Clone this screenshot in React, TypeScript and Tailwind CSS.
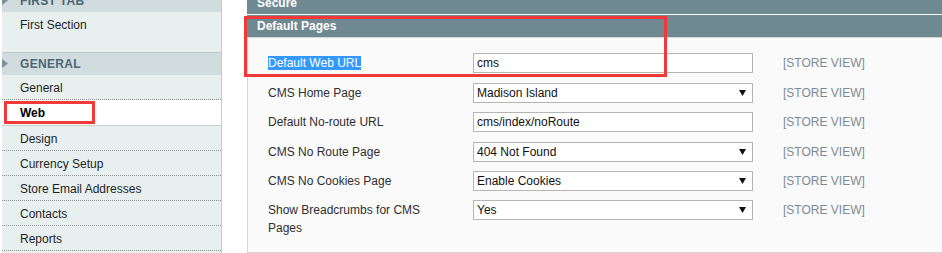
import React from "react";

const font = { fontFamily: '"Liberation Sans", Arial, sans-serif' };

function Arrow() {
  return (
    <svg width="7" height="6" viewBox="0 0 7 6" className="shrink-0">
      <path d="M0 0 L7 0 L3.5 6 Z" fill="#111" />
    </svg>
  );
}

type Row = {
  label: React.ReactNode;
  value: string;
  kind: "input" | "select";
  h: string;
};

const rows: Row[] = [
  {
    label: <span className="bg-[#3399ff] text-white">Default Web URL</span>,
    value: "cms",
    kind: "input",
    h: "h-[30px]",
  },
  { label: "CMS Home Page", value: "Madison Island", kind: "select", h: "h-[29px]" },
  { label: "Default No-route URL", value: "cms/index/noRoute", kind: "input", h: "h-[30px]" },
  { label: "CMS No Route Page", value: "404 Not Found", kind: "select", h: "h-[29px]" },
  { label: "CMS No Cookies Page", value: "Enable Cookies", kind: "select", h: "h-[29px]" },
  {
    label: (
      <>
        Show Breadcrumbs for CMS
        <br />
        Pages
      </>
    ),
    value: "Yes",
    kind: "select",
    h: "h-[37px]",
  },
];

export default function App() {
  return (
    <div
      className="w-[942px] h-[253px] overflow-hidden bg-white flex text-[12px] leading-[14px]"
      style={font}
    >
      {/* Sidebar */}
      <div className="ml-[2px] w-[220px] shrink-0 bg-[#e7efef] border-r border-[#c2cccd] flex flex-col">
        <div className="mt-[-11px] h-[23px] bg-[#d0dcde] flex items-center relative pl-[18px]">
          <svg width="6" height="9" viewBox="0 0 6 9" className="absolute left-0 top-[7px]">
            <path d="M0 0 L6 4.5 L0 9 Z" fill="#7a9098" />
          </svg>
          <span className="font-bold text-[#4e6674] tracking-[0.3px]">FIRST TAB</span>
        </div>
        <div className="h-[40px] pt-[5px] pl-[18px] leading-[16px] text-[#1f1f1f]">First Section</div>
        <div className="h-[23px] bg-[#d0dcde] border-t border-[#bcc8ca] flex items-center relative pl-[18px]">
          <svg width="6" height="9" viewBox="0 0 6 9" className="absolute left-0 top-[6px]">
            <path d="M0 0 L6 4.5 L0 9 Z" fill="#7a9098" />
          </svg>
          <span className="font-bold text-[#4e6674] tracking-[0.3px]">GENERAL</span>
        </div>
        <div className="h-[25px] flex items-center pl-[18px] pt-[1px] border-b border-dotted border-[#8a8f90] text-[#1f1f1f]">
          General
        </div>
        <div className="h-[25px] bg-white flex items-center pl-[18px] pt-[1px] font-bold text-black relative">
          Web
          <div className="absolute left-[2px] top-[1px] w-[91px] h-[23px] border-[3px] border-[#f03a3a]" />
        </div>
        <div className="h-[26px] flex items-center pl-[18px] pt-[1px] border-t border-t-[#c4cecf] border-b border-b-[#8a8f90] [border-bottom-style:dotted] text-[#1f1f1f]">
          Design
        </div>
        {["Currency Setup", "Store Email Addresses", "Contacts", "Reports"].map((t) => (
          <div
            key={t}
            className="h-[25px] flex items-center pl-[18px] pt-[1px] border-b border-dotted border-[#8a8f90] text-[#1f1f1f]"
          >
            {t}
          </div>
        ))}
      </div>

      {/* Main */}
      <div className="ml-[25px] flex-1 flex flex-col relative">
        <div className="mt-[-8px] h-[22px] bg-[#6f8992] border-b border-white flex items-center pl-[10px] font-bold text-white box-content">
          Secure
        </div>
        <div className="h-[22px] bg-[#6f8992] flex items-center pl-[10px] font-bold text-white">
          Default Pages
        </div>
        <div className="flex-1 bg-[#fafafa] border-t border-[#d6d6d6] border-l border-b pt-[15px] pl-[20px]">
          {rows.map((r, i) => (
            <div key={i} className={"flex items-start " + r.h}>
              <div className="w-[205px] shrink-0 pt-[1px] leading-[18px] text-[#2f2f2f]">{r.label}</div>
              <div className="w-[280px] h-[20px] shrink-0 bg-white border border-[#b5b5b5] flex items-center pl-[3px] pr-[6px] text-[#111]">
                <span className="flex-1">{r.value}</span>
                {r.kind === "select" && <Arrow />}
              </div>
              <div className="ml-[30px] pt-[1px] leading-[18px] text-[#7d8a96]">[STORE VIEW]</div>
            </div>
          ))}
        </div>
        <div className="absolute left-[-3px] top-[16px] w-[423px] h-[61px] border-[3px] border-[#f03a3a]" />
      </div>
    </div>
  );
}
